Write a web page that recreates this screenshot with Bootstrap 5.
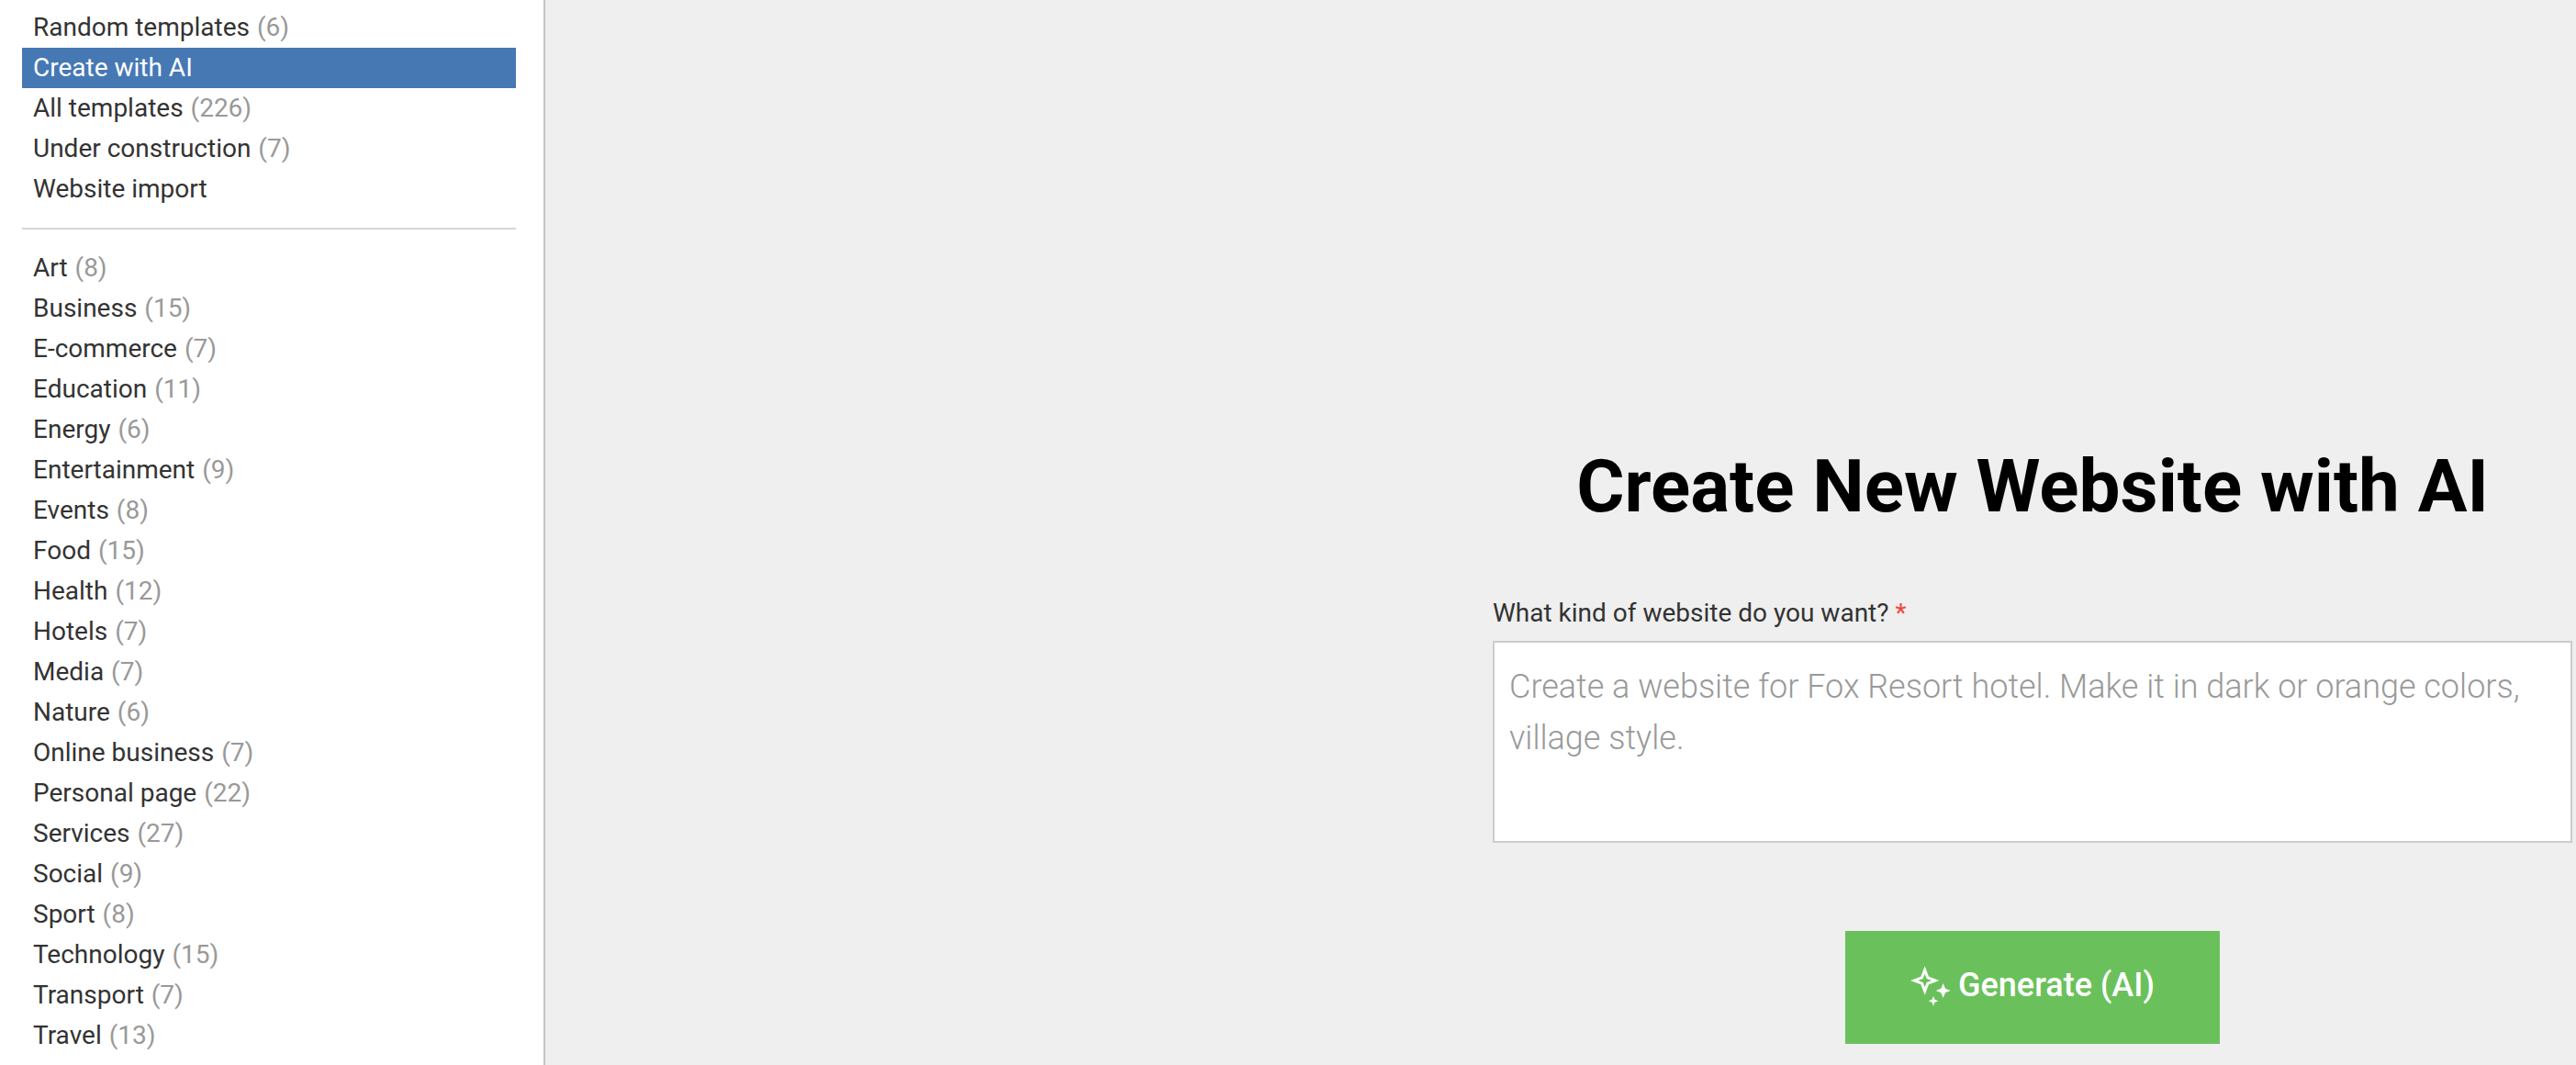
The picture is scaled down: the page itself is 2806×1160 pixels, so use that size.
<!DOCTYPE html>
<html lang="en">
<head>
<meta charset="utf-8">
<title>Create New Website with AI</title>
<link href="https://cdn.jsdelivr.net/npm/bootstrap@5.3.0/dist/css/bootstrap.min.css" rel="stylesheet">
<style>
body{font-family:Roboto,sans-serif;background:#efefef;color:#333;height:1160px;overflow:hidden}
.side{width:594px;height:1160px;background:#fff;border-right:2px solid #c4c4c4;padding:8px 30px 0 24px}
.side .nav-link{height:44px;line-height:44px;padding:0 0 0 12px;font-size:28px;color:#333;white-space:nowrap}
.side .nav-link span{color:#999;margin-left:1px}
.side .nav-link.active{background:#4678b4;color:#fff}
.rule{height:2px;background:#d6d6d6;margin:20px 0}
.mainpane{padding-left:1032px}
.form-col{width:1176px}
h1{font-size:80px;font-weight:700;line-height:96px;color:#000;margin:482px 0 0}
.lbl{font-size:28px;line-height:40px;margin-top:70px}
.req{color:#f44336}
.box{height:220px;border:2px solid #ccc;background:#fff;padding:20px 16px;font-size:36px;line-height:56px;font-weight:300;resize:none;margin-top:10px}
.box::placeholder{color:#999;opacity:1}
.gen,.gen:hover{width:408px;height:123px;background:#6ac15b;color:#fff;font-size:36px;font-weight:500;line-height:42px;margin-top:96px;border:0;padding:0 1px 6px 0}
.gen svg{width:46px;height:46px;margin-right:7px}
</style>
<script src="https://cdn.jsdelivr.net/npm/bootstrap@5.3.0/dist/js/bootstrap.bundle.min.js"></script>
</head>
<body class="d-flex">
<aside class="side flex-shrink-0">
<nav class="nav flex-column">
<a href="#" class="nav-link">Random templates <span>(6)</span></a>
<a href="#" class="nav-link active">Create with AI</a>
<a href="#" class="nav-link">All templates <span>(226)</span></a>
<a href="#" class="nav-link">Under construction <span>(7)</span></a>
<a href="#" class="nav-link">Website import</a>
</nav>
<div class="rule"></div>
<nav class="nav flex-column">
<a href="#" class="nav-link">Art <span>(8)</span></a>
<a href="#" class="nav-link">Business <span>(15)</span></a>
<a href="#" class="nav-link">E-commerce <span>(7)</span></a>
<a href="#" class="nav-link">Education <span>(11)</span></a>
<a href="#" class="nav-link">Energy <span>(6)</span></a>
<a href="#" class="nav-link">Entertainment <span>(9)</span></a>
<a href="#" class="nav-link">Events <span>(8)</span></a>
<a href="#" class="nav-link">Food <span>(15)</span></a>
<a href="#" class="nav-link">Health <span>(12)</span></a>
<a href="#" class="nav-link">Hotels <span>(7)</span></a>
<a href="#" class="nav-link">Media <span>(7)</span></a>
<a href="#" class="nav-link">Nature <span>(6)</span></a>
<a href="#" class="nav-link">Online business <span>(7)</span></a>
<a href="#" class="nav-link">Personal page <span>(22)</span></a>
<a href="#" class="nav-link">Services <span>(27)</span></a>
<a href="#" class="nav-link">Social <span>(9)</span></a>
<a href="#" class="nav-link">Sport <span>(8)</span></a>
<a href="#" class="nav-link">Technology <span>(15)</span></a>
<a href="#" class="nav-link">Transport <span>(7)</span></a>
<a href="#" class="nav-link">Travel <span>(13)</span></a>
</nav>
</aside>
<main class="mainpane flex-shrink-0">
<div class="form-col">
<h1 class="text-center">Create New Website with AI</h1>
<label class="lbl d-block" for="prompt">What kind of website do you want? <span class="req">*</span></label>
<textarea id="prompt" class="box d-block w-100 rounded-0" placeholder="Create a website for Fox Resort hotel. Make it in dark or orange colors, village style."></textarea>
<button type="button" class="btn gen rounded-0 d-flex align-items-center justify-content-center mx-auto">
<svg viewBox="271 149 138 138" fill="#fff" aria-hidden="true">
<path fill-rule="evenodd" d="M321 156L334 190L368 203L334 216L321 250L308 216L274 203L308 190ZM321 181L315 197L299 203L315 209L321 225L327 209L343 203L327 197Z"/>
<path d="M381 212L388 229L405 236L388 243L381 260L374 243L357 236L374 229Z"/>
<path d="M349 254L353.500 265.500L365 270L353.500 274.500L349 286L344.500 274.500L333 270L344.500 265.500Z"/>
</svg><span>Generate (AI)</span></button>
</div>
</main>
</body>
</html>
